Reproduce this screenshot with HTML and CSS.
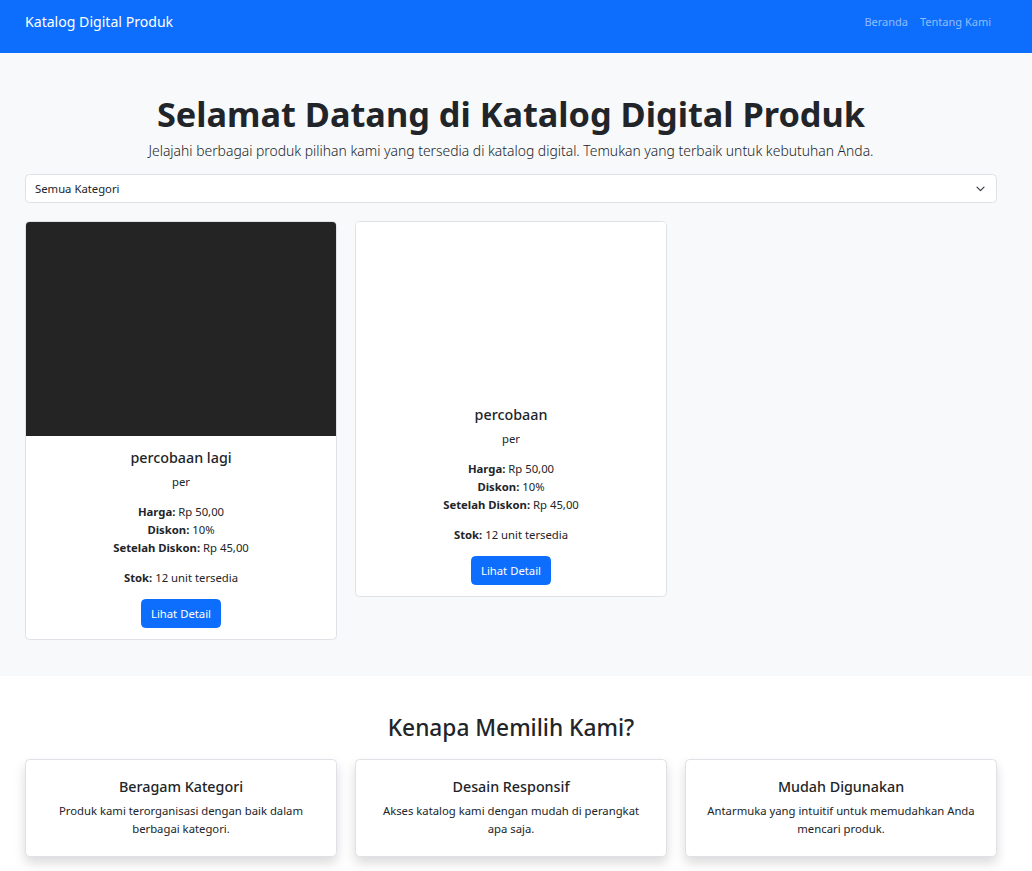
FILE: index.html
```html
<!DOCTYPE html>
<html lang="id">
<head>
<meta charset="utf-8">
<title>Katalog Digital Produk</title>
<link rel="stylesheet" href="styles.css">
</head>
<body>
<nav class="navbar">
  <a class="brand" href="#">Katalog Digital Produk</a>
  <ul class="nav">
    <li><a class="nav-link" href="#">Beranda</a></li>
    <li><a class="nav-link" href="#">Tentang Kami</a></li>
  </ul>
</nav>

<section class="hero">
  <h1 class="hero-title">Selamat Datang di Katalog Digital Produk</h1>
  <p class="lead">Jelajahi berbagai produk pilihan kami yang tersedia di katalog digital. Temukan yang terbaik untuk kebutuhan Anda.</p>
  <div class="select">
    <span>Semua Kategori</span>
    <svg class="chev" width="9" height="6" viewBox="0 0 9 6"><path d="M1 1.2l3.5 3.5 3.5-3.5" fill="none" stroke="#343a40" stroke-width="1.2" stroke-linecap="round" stroke-linejoin="round"/></svg>
  </div>
  <div class="products">
    <div class="card">
      <div class="card-img dark"></div>
      <div class="card-body">
        <h5 class="card-title">percobaan lagi</h5>
        <p class="card-text">per</p>
        <p class="card-text"><strong>Harga:</strong> Rp 50,00<br><strong>Diskon:</strong> 10%<br><strong>Setelah Diskon:</strong> Rp 45,00</p>
        <p class="card-text"><strong>Stok:</strong> 12 unit tersedia</p>
        <a class="btn" href="#">Lihat Detail</a>
      </div>
    </div>
    <div class="card">
      <div class="card-img blank"></div>
      <div class="card-body">
        <h5 class="card-title">percobaan</h5>
        <p class="card-text">per</p>
        <p class="card-text"><strong>Harga:</strong> Rp 50,00<br><strong>Diskon:</strong> 10%<br><strong>Setelah Diskon:</strong> Rp 45,00</p>
        <p class="card-text"><strong>Stok:</strong> 12 unit tersedia</p>
        <a class="btn" href="#">Lihat Detail</a>
      </div>
    </div>
  </div>
</section>

<section class="why">
  <h2 class="why-title">Kenapa Memilih Kami?</h2>
  <div class="features">
    <div class="feature">
      <h5 class="feature-title">Beragam Kategori</h5>
      <p class="feature-text">Produk kami terorganisasi dengan baik dalam berbagai kategori.</p>
    </div>
    <div class="feature">
      <h5 class="feature-title">Desain Responsif</h5>
      <p class="feature-text">Akses katalog kami dengan mudah di perangkat apa saja.</p>
    </div>
    <div class="feature">
      <h5 class="feature-title">Mudah Digunakan</h5>
      <p class="feature-text">Antarmuka yang intuitif untuk memudahkan Anda mencari produk.</p>
    </div>
  </div>
</section>
</body>
</html>
```
FILE: styles.css
```css
* { box-sizing: border-box; }
html, body { margin: 0; padding: 0; }
body {
  font-family: "Segoe UI", "Noto Sans", "Open Sans", sans-serif;
  font-size: 11.3px;
  line-height: 18px;
  color: #212529;
  background: #fff;
}
a { text-decoration: none; }

.navbar {
  background: #0d6efd;
  height: 53px;
  padding: 6px 35px 15px 25px;
  display: flex;
  justify-content: space-between;
  align-items: flex-start;
}
.brand {
  color: #fff;
  font-size: 14.1px;
  line-height: 22px;
  padding: 5px 0;
}
.nav {
  list-style: none;
  margin: 0;
  padding: 0;
  display: flex;
}
.nav-link {
  display: block;
  color: rgba(255,255,255,.55);
  font-size: 11px;
  line-height: 18px;
  padding: 7px 6px;
}

.hero {
  background: #f8f9fa;
  padding: 36px 35px 36px 25px;
}
.hero-title {
  margin: 0 0 1px;
  text-align: center;
  font-size: 34.3px;
  line-height: 50px;
  font-weight: 700;
}
.lead {
  margin: 0 0 12px;
  text-align: center;
  font-size: 13.9px;
  line-height: 22px;
  font-weight: 300;
}
.select {
  height: 29px;
  background: #fff;
  border: 1px solid #dee2e6;
  border-radius: 4.5px;
  padding: 0 11px 0 9px;
  display: flex;
  align-items: center;
  justify-content: space-between;
  margin-bottom: 18px;
}
.chev { display: block; }

.products {
  display: grid;
  grid-template-columns: repeat(3, 312px);
  column-gap: 18px;
  align-items: start;
}
.card {
  background: #fff;
  border: 1px solid #dee2e6;
  border-radius: 4.5px;
  overflow: hidden;
}
.card-img.dark { height: 214px; background: #242424; }
.card-img.blank { height: 171px; background: #fff; }
.card-body {
  padding: 13px 12px 11px;
  text-align: center;
}
.card-title {
  margin: 0 0 6px;
  font-size: 14.3px;
  line-height: 18px;
  font-weight: 500;
}
.card-text { margin: 0 0 12px; }
.card-text strong { font-weight: 700; }
.btn {
  display: inline-block;
  background: #0d6efd;
  color: #fff;
  border: 1px solid #0d6efd;
  border-radius: 4.5px;
  padding: 4.5px 9px;
  line-height: 18px;
  font-size: 11.3px;
}

.why {
  background: #fff;
  padding: 37px 35px 15px 25px;
}
.why-title {
  margin: 0 0 17px;
  text-align: center;
  font-size: 22.7px;
  line-height: 29px;
  font-weight: 500;
}
.features {
  display: grid;
  grid-template-columns: repeat(3, 312px);
  column-gap: 18px;
}
.feature {
  background: #fff;
  border: 1px solid #dee2e6;
  border-radius: 4.5px;
  box-shadow: 0 6px 12px rgba(0,0,0,.15);
  padding: 18px 18px 18px;
  text-align: center;
}
.feature-title {
  margin: 0 0 6px;
  font-size: 14.3px;
  line-height: 18px;
  font-weight: 500;
}
.feature-text { margin: 0; }
```
